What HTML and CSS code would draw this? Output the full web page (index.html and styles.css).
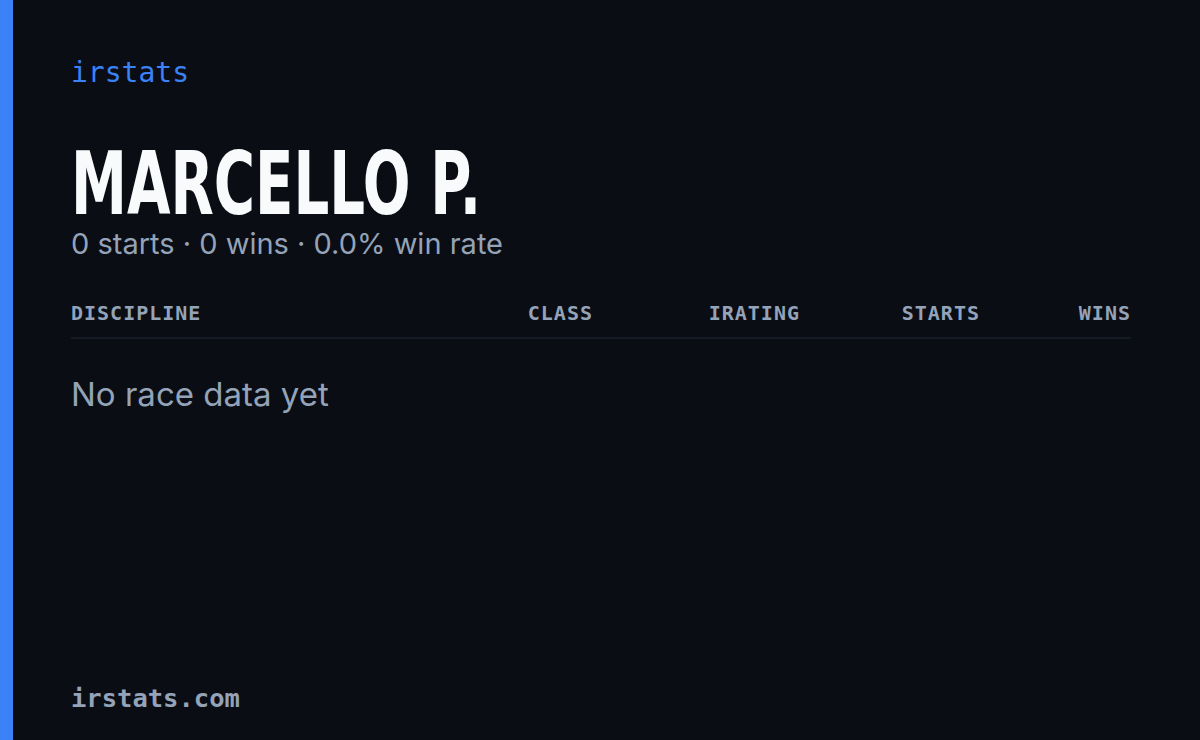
FILE: index.html
```html
<!DOCTYPE html>
<html lang="en">
<head>
    <meta charset="UTF-8">
    <meta name="viewport" content="width=device-width, initial-scale=1.0">
    <title>irstats - Marcello P.</title>
    <link rel="stylesheet" href="styles.css">
</head>
<body>
    <div class="accent"></div>
    <div class="card">
        <div class="brand">irstats</div>
        <h1 class="name">MARCELLO P.</h1>
        <div class="summary">0 starts · 0 wins · 0.0% win rate</div>

        <div class="table-head">
            <span>Discipline</span>
            <span class="num">Class</span>
            <span class="num">iRating</span>
            <span class="num">Starts</span>
            <span class="num">Wins</span>
        </div>
        <div class="empty">No race data yet</div>

        <div class="footer">irstats.com</div>
    </div>
</body>
</html>
```

FILE: styles.css
```css
body {
    margin: 0;
    background-color: #0a0d14;
    display: flex;
    height: 740px;
    overflow: hidden;
    font-family: Inter, sans-serif;
}
.accent {
    width: 13px;
    background: #3b82f6;
    flex-shrink: 0;
}
.card {
    flex: 1;
    display: flex;
    flex-direction: column;
    padding: 56px 69px 26px 58px;
}
.brand {
    font-family: "DejaVu Sans Mono", monospace;
    font-size: 28px;
    line-height: 34px;
    color: #3b82f6;
}
.name {
    margin: 62px 0 0;
    font-family: "DejaVu Sans Condensed", sans-serif;
    font-weight: bold;
    font-size: 88px;
    line-height: 64px;
    color: #f8fafc;
    transform: scaleX(0.71);
    transform-origin: left;
    white-space: nowrap;
}
.summary {
    margin-top: 10px;
    font-size: 29px;
    line-height: 36px;
    color: #94a3b8;
}
.table-head {
    display: grid;
    grid-template-columns: 1fr 130px 207px 180px 151px;
    margin-top: 38px;
    padding-bottom: 11px;
    border-bottom: 2px solid #161a24;
    font-family: "DejaVu Sans Mono", monospace;
    font-weight: bold;
    font-size: 20px;
    line-height: 26px;
    letter-spacing: 1px;
    text-transform: uppercase;
    color: #94a3b8;
}
.table-head .num {
    text-align: right;
}
.empty {
    margin-top: 35px;
    font-size: 33px;
    line-height: 40px;
    color: #94a3b8;
}
.footer {
    margin-top: auto;
    font-family: "DejaVu Sans Mono", monospace;
    font-weight: bold;
    font-size: 25.5px;
    line-height: 32px;
    color: #94a3b8;
}
```
